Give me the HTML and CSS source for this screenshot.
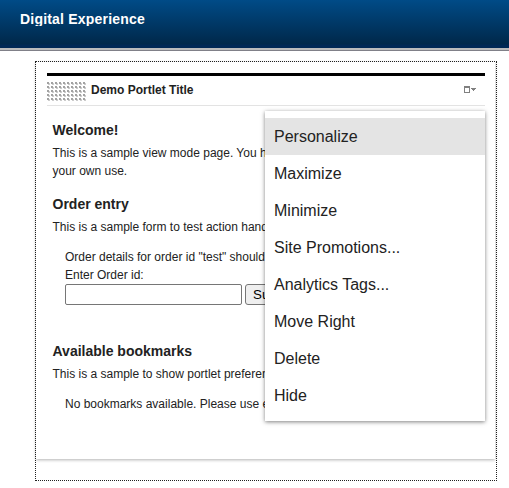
FILE: index.html
```html
<!DOCTYPE html>
<html lang="en">
<head>
<meta charset="utf-8">
<title>Digital Experience</title>
<link rel="stylesheet" href="styles.css">
</head>
<body>
<header class="banner"><span class="brand">Digital Experience</span></header>
<main class="frame">
  <section class="portlet">
    <div class="titlebar">
      <svg class="handle" width="39" height="19" shape-rendering="crispEdges">
        <defs><pattern id="grip" width="4" height="4" patternUnits="userSpaceOnUse"><path fill="#a2a2a2" d="M0 0h2v2H0z"/><path fill="#ccc" d="M1 2h2v1H1zM2 1h1v1H2z"/></pattern></defs>
        <rect width="39" height="19" fill="url(#grip)"/>
      </svg>
      <h1 class="title">Demo Portlet Title</h1>
      <svg class="toggle" width="12" height="7" shape-rendering="crispEdges"><path fill="#808080" d="M0 0h6v7H0zM7 2h5v1H7zM8 3h3v1H8zM9 4h1v1H9z"/><path fill="#fff" d="M1 2h4v4H1z"/></svg>
      <ul class="menu">
        <li class="item active">Personalize</li>
        <li class="item">Maximize</li>
        <li class="item">Minimize</li>
        <li class="item">Site Promotions...</li>
        <li class="item">Analytics Tags...</li>
        <li class="item">Move Right</li>
        <li class="item">Delete</li>
        <li class="item">Hide</li>
      </ul>
    </div>
    <div class="content">
      <h2>Welcome!</h2>
      <p>This is a sample view mode page. You h<br>your own use.</p>
      <h2>Order entry</h2>
      <p>This is a sample form to test action hand</p>
      <form class="order">
        <div>Order details for order id "test" should</div>
        <label for="order">Enter Order id:</label>
        <div class="fields"><input id="order" type="text"><button type="button">Su</button></div>
      </form>
      <h2>Available bookmarks</h2>
      <p>This is a sample to show portlet preferen</p>
      <div class="bookmarks">No bookmarks available. Please use e</div>
    </div>
  </section>
</main>
</body>
</html>
```
FILE: styles.css
```css
* { box-sizing: border-box; }
body {
  margin: 0;
  height: 488px;
  overflow: hidden;
  background: #fff;
  color: #222;
  font: 12px/18px "Liberation Sans", Arial, sans-serif;
}
.banner {
  height: 51px;
  padding: 10px 20px 0;
  background: linear-gradient(#004b87, #00284a 44px, #002855 45px);
  border-bottom: 1px solid #808088;
  box-shadow: inset 0 -2px #bbb;
}
.brand {
  display: block;
  height: 16px;
  overflow: hidden;
  color: #fff;
  font-size: 14px;
  font-weight: bold;
  letter-spacing: .2px;
}
.frame {
  width: 462px;
  height: 420px;
  margin: 10px 0 0 35px;
  border: 1px dotted #222;
}
.portlet {
  height: 397px;
  padding: 11px;
  margin-right: 1px;
  box-shadow: 0 1px 3px rgba(0,0,0,.3);
}
.titlebar {
  position: relative;
  display: flex;
  align-items: center;
  width: 438px;
  height: 33px;
  border-top: 3px solid #000;
  border-bottom: 1px solid #e3e3e3;
}
.handle { margin-top: 2px; }
.title {
  flex: 1;
  margin: 0 0 2px 5px;
  font-size: 12px;
  line-height: 18px;
}
.toggle { margin: 0 9px 2px 0; }
.content { padding: 13px 5.5px 0; }
h2 { margin: 0; font-size: 14px; line-height: 22px; }
p { height: 36px; margin: 3px 0 13px; white-space: nowrap; }
h2:not(:first-child) + p { height: 18px; margin-bottom: 12px; }
.order { height: 92px; margin-left: 12.5px; white-space: nowrap; }
.order label { display: block; }
.fields { display: flex; gap: 3px; }
.fields input {
  width: 177px;
  height: 21px;
  border: 1px solid #767676;
  border-radius: 2px;
  background: #fff;
}
.fields button {
  width: 55px;
  height: 21px;
  padding: 0 7px;
  border: 1px solid #767676;
  border-radius: 3px;
  background: #efefef;
  color: #000;
  font: 13.333px "Liberation Sans", Arial, sans-serif;
  text-align: left;
}
.bookmarks { margin-left: 12.5px; white-space: nowrap; }
.menu {
  position: absolute;
  top: 35px;
  right: 0;
  width: 220px;
  height: 310px;
  margin: 0;
  padding: 7px 0;
  list-style: none;
  background: #fff;
  box-shadow: 0 1px 4px rgba(0,0,0,.5);
}
.item {
  height: 37px;
  padding-left: 9px;
  font-size: 16px;
  line-height: 37px;
}
.active { background: #e4e4e4; }
```
